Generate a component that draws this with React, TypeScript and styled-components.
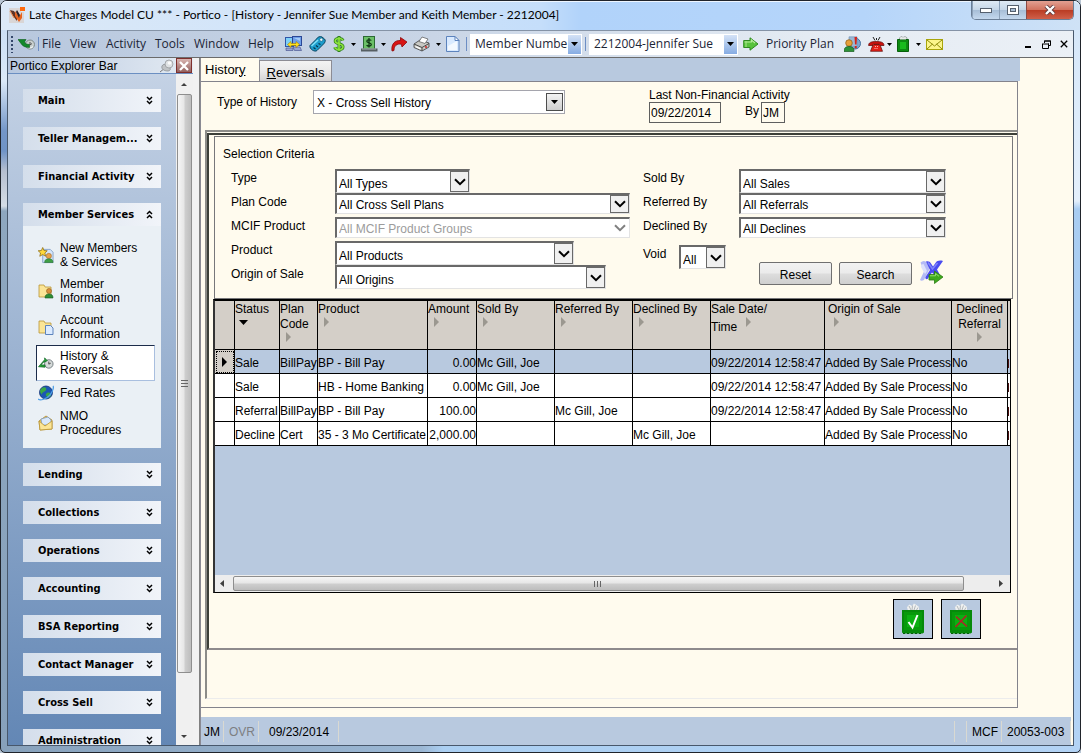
import React from "react";
import styled, { createGlobalStyle, css } from "styled-components";

const ui = `"Liberation Sans", Arial, sans-serif`;
const chrome = `"Open Sans", "Noto Sans", sans-serif`;
const cream = "#fffbee";
const steel = "#b8c9df";

const GlobalStyle = createGlobalStyle`
  * { box-sizing: border-box; }
  body { margin: 0; background: #b9c6d4; font: 12px/14px ${ui}; color: #000; }
  button, input, select { font: inherit; color: inherit; margin: 0; }
  svg { display: block; flex: none; }
`;

const Window = styled.div`
  height: 100vh;
  min-height: 600px;
  display: flex;
  flex-direction: column;
  padding: 0 6px 6px;
  border: 1px solid #20242b;
  border-radius: 7px 7px 5px 5px;
  background:
    linear-gradient(180deg, #c4daf3 0, #dbe9f8 80px, #7396c8 130px, #6f93c6 150px, #b5bfd0 170px, #d5dde6 205px, #8ea7bf 210px, #87a1bb 100%) left / 7px 100% no-repeat,
    linear-gradient(180deg, #9cc4ee 0, #d6e7f9 20px, #e4effb 200px, #a9cdf2 208px, #b3d3f5 100%) right / 7px 100% no-repeat,
    linear-gradient(90deg, #87a1bb 0, #9bb7d4 39%, #abcff2 41%, #b3d3f5 100%);
`;

const TitleBar = styled.header`
  height: 29px;
  flex: none;
  display: flex;
  align-items: flex-start;
  margin: 0 -6px;
  padding: 0 6px 0 8px;
  border-radius: 6px 6px 0 0;
  background: linear-gradient(90deg, #dce9f7 0, #d3e5f9 240px, #c5defa 540px, #b1d3fa 580px, #b5d5fa 80%, #cfe2f6 100%);
  box-shadow: inset 0 1px 0 #eef6ff;
`;

const Title = styled.h1`
  flex: 1;
  margin: 6px 0 0 4px;
  font: 12px/16px Lato, ${chrome};
  white-space: nowrap;
`;

const AppIcon = styled.span`
  margin-top: 6px;
`;

const CaptionButtons = styled.div`
  display: flex;
  height: 19px;
  border: 1px solid #6a7e96;
  border-top: 0;
  border-radius: 0 0 5px 5px;
  overflow: hidden;
`;

const CaptionButton = styled.button<{ $close?: boolean }>`
  width: ${(p) => (p.$close ? 47 : 27)}px;
  display: grid;
  place-items: center;
  padding: 0;
  border: 0;
  border-left: ${(p) => (p.$close ? "1px solid #8b4a44" : "1px solid #8ba0b8")};
  background: ${(p) =>
    p.$close
      ? "linear-gradient(#e2a092 0, #d2735f 48%, #b93b22 50%, #d0604a 100%)"
      : "linear-gradient(#dfeaf5 0, #c5d6e8 48%, #a6bdd6 50%, #c4d8ee 100%)"};
`;

const Client = styled.div`
  flex: 1;
  min-height: 0;
  display: flex;
  flex-direction: column;
  border: 1px solid #48586c;
  border-top-color: #8593a6;
  background: ${cream};
`;

const Toolbar = styled.nav`
  height: 27px;
  flex: none;
  display: flex;
  align-items: center;
  padding: 0 0 0 3px;
  font: 12px/16px ${chrome};
  color: #1c2536;
  background: linear-gradient(90deg, #b8c8de 0, #c9d5e6 40%, #e4ebf3 75%, #ebf0f6 100%);
  border-bottom: 1px solid #6b6b6b;
`;

const Grip = styled.span`
  width: 2px;
  height: 17px;
  margin-right: 5px;
  background: repeating-linear-gradient(180deg, #34476b 0 2px, transparent 2px 4px);
`;

const ToolDivider = styled.span`
  width: 1px;
  height: 14px;
  margin: 0 3px;
  background: #6d8ec4;
`;

const MenuItem = styled.button<{ $w: number }>`
  width: ${(p) => p.$w}px;
  padding: 0;
  border: 0;
  background: none;
  text-align: left;
  white-space: nowrap;
`;

const ToolButton = styled.button<{ $w?: number }>`
  width: ${(p) => p.$w ?? 24}px;
  height: 22px;
  flex: none;
  display: flex;
  align-items: center;
  justify-content: space-between;
  padding: 0 5px 0 0;
  border: 0;
  background: none;
`;

const Spacer = styled.span`
  flex: 1;
`;

const ToolCombo = styled.span<{ $w: number; $after?: number }>`
  display: grid;
  grid-template-columns: minmax(0, 1fr) 14px;
  width: ${(p) => p.$w}px;
  height: 21px;
  margin-right: ${(p) => p.$after ?? 0}px;
  background: #fff;
  & > select {
    grid-area: 1 / 1 / 2 / 3;
    width: 100%;
    appearance: none;
    border: 0;
    padding: 0 14px 0 5px;
    background: transparent;
    text-overflow: clip;
  }
  & > i {
    grid-area: 1 / 2;
    display: grid;
    place-items: center;
    margin: 1px 1px 1px 0;
    pointer-events: none;
    background: linear-gradient(#d4e2f6, #86ace3);
  }
`;

const MdiButton = styled.button`
  width: 18px;
  height: 18px;
  padding: 0;
  border: 0;
  display: grid;
  place-items: center;
  background: none;
`;

const Body = styled.div`
  flex: 1;
  min-height: 0;
  display: flex;
`;

const Sidebar = styled.aside`
  width: 185px;
  flex: none;
  display: flex;
  flex-direction: column;
`;

const SidebarTitle = styled.div`
  height: 16px;
  flex: none;
  display: flex;
  align-items: center;
  gap: 1px;
  padding: 0 1px 0 2px;
  background: linear-gradient(90deg, #b6c7df, #e4ebf3);
  border-bottom: 1px solid #6b8fc2;
  & > h2 {
    flex: 1;
    margin: 0;
    font: 12px/14px ${ui};
  }
`;

const PlainIcon = styled.button<{ $close?: boolean }>`
  width: 16px;
  height: 15px;
  display: grid;
  place-items: center;
  padding: 0;
  border: ${(p) => (p.$close ? "1px solid #7e2f2c" : "0")};
  background: ${(p) => (p.$close ? "linear-gradient(#d9b5b1, #93605e)" : "none")};
`;

const SidebarBody = styled.div`
  flex: 1;
  min-height: 0;
  display: flex;
`;

const Groups = styled.div`
  flex: 1;
  min-width: 0;
  overflow: hidden;
  padding: 15px 15px 0;
  background: linear-gradient(#c4d2e5, #6387b5);
`;

const Group = styled.section`
  margin-bottom: 15px;
`;

const GroupHeader = styled.button`
  width: 100%;
  height: 23px;
  display: flex;
  align-items: center;
  justify-content: space-between;
  padding: 0 8px 0 15px;
  border: 0;
  background: linear-gradient(90deg, #d4deeb, #f1f4f9);
  font: bold 11px/16px "DejaVu Sans Condensed", "DejaVu Sans", sans-serif;
  white-space: nowrap;
`;

const GroupItems = styled.ul`
  margin: 0;
  padding: 11px 6px 7px 13px;
  list-style: none;
  background: #eaf0f5;
`;

const GroupLink = styled.a<{ $active?: boolean }>`
  display: flex;
  align-items: center;
  gap: 6px;
  padding: 3px 1px;
  border: 1px solid transparent;
  color: #000;
  text-decoration: none;
  white-space: pre-line;
  ${(p) =>
    p.$active &&
    css`
      background: #fff;
      border-color: #1c2c4a #a9bfdf #a9bfdf #1c2c4a;
    `}
  & > svg {
    width: 16px;
  }
`;

const VScroll = styled.div`
  width: 17px;
  flex: none;
  display: flex;
  flex-direction: column;
  align-items: center;
  justify-content: space-between;
  padding: 7px 0 5px;
  background: #f0f0f0;
`;

const VThumb = styled.div`
  flex: 1;
  width: 15px;
  margin: 6px 0 60px;
  display: grid;
  place-items: center;
  border: 1px solid #8e8e8e;
  border-radius: 2px;
  background: linear-gradient(90deg, #f5f5f5, #e6e6e6 48%, #cfcfcf 52%, #bdbdbd);
`;

const Splitter = styled.div`
  width: 7px;
  flex: none;
  background: #f1f1f1;
  border-right: 1px solid #808080;
`;

const Main = styled.main`
  flex: 1;
  min-width: 0;
  display: flex;
  flex-direction: column;
  border-left: 1px solid #8a8a93;
`;

const Workspace = styled.div`
  flex: 1;
  min-height: 0;
  display: flex;
  flex-direction: column;
  margin: 0 55px 9px 0;
`;

const Tabs = styled.div`
  height: 23px;
  flex: none;
  display: flex;
  align-items: flex-end;
  background: ${steel};
  margin-right: -2px;
`;

const Tab = styled.button<{ $active?: boolean }>`
  height: ${(p) => (p.$active ? 23 : 21)}px;
  width: ${(p) => (p.$active ? 58 : 73)}px;
  padding: ${(p) => (p.$active ? "0 4px" : "3px 4px 0")};
  text-align: ${(p) => (p.$active ? "left" : "center")};
  border: 1px solid ${(p) => (p.$active ? cream : "#8c8c94")};
  border-width: ${(p) => (p.$active ? "0" : "1px 1px 0")};
  background: ${(p) => (p.$active ? cream : "linear-gradient(#f3f3f3, #e9e9e9 50%, #d3d3d3)")};
  font-size: 13px;
  line-height: 16px;
`;

const TabPanel = styled.section`
  flex: 1;
  min-height: 0;
  display: flex;
  flex-direction: column;
  border: 1px solid #83838c;
  border-left: 0;
  padding: 0 0 8px 4px;
`;

const HistoryHeader = styled.div`
  height: 48px;
  flex: none;
  display: grid;
  grid-template-columns: 96px 252px 84px auto;
  align-items: start;
  padding: 8px 0 0 12px;
`;

const HeaderLabel = styled.label`
  line-height: 24px;
`;

const TypeCombo = styled.span`
  display: grid;
  grid-template-columns: minmax(0, 1fr) 18px;
  height: 24px;
  border: 1px solid #a5a5ad;
  background: #fff;
  & > select {
    grid-area: 1 / 1 / 2 / 3;
    appearance: none;
    border: 0;
    padding: 2px 20px 0 3px;
    background: transparent;
  }
  & > i {
    grid-area: 1 / 2;
    display: grid;
    place-items: center;
    margin: 2px 1px 2px 0;
    pointer-events: none;
    border: 1px solid #4d4d4d;
    background: linear-gradient(#f2f2f2, #cfcfcf);
  }
`;

const LastActivity = styled.div`
  display: grid;
  grid-template-columns: 72px 40px 24px;
  margin-top: -1px;
  & > span {
    grid-column: 1 / 4;
    line-height: 13px;
    white-space: nowrap;
  }
  & > label {
    padding: 2px 2px 0 0;
    text-align: right;
  }
`;

const ReadBox = styled.input`
  width: 100%;
  height: 21px;
  padding: 0 1px;
  border: 1px solid #5f5f5f;
  background: ${cream};
`;

const OuterFrame = styled.div`
  flex: 1;
  min-height: 0;
  display: flex;
  flex-direction: column;
  border: 2px solid #8c8c88;
  border-right: 0;
  border-bottom: 1px solid #ececec;
  padding: 1px 0 48px;
`;

const InnerFrame = styled.div`
  flex: 1;
  min-height: 0;
  display: flex;
  flex-direction: column;
  border: 2px solid #3c3f38;
  border-right: 0;
  border-bottom-color: #8e8a8c;
  padding: 1px 4px 9px;
`;

const Criteria = styled.form`
  height: 163px;
  flex: none;
  display: grid;
  grid-template-columns: 412px minmax(0, 1fr);
  grid-template-rows: 32px 1fr;
  margin-left: 1px;
  padding: 0 0 0 8px;
  border: 1px solid #77777a;
  & > h3 {
    grid-column: 1 / 3;
    margin: 0;
    padding-top: 10px;
    font: 12px/14px ${ui};
  }
`;

const Fields = styled.div`
  padding-left: 8px;
`;

const Field = styled.div<{ $label: number }>`
  height: 24px;
  display: grid;
  grid-template-columns: ${(p) => p.$label}px max-content;
  align-items: start;
  & > label {
    line-height: 18px;
  }
`;

const FieldCombo = styled.span<{ $w: number; $tall?: boolean; $off?: boolean }>`
  display: grid;
  grid-template-columns: minmax(0, 1fr) 19px;
  width: ${(p) => p.$w}px;
  height: ${(p) => (p.$tall ? 24 : 21)}px;
  border: 1px solid #e3e3e3;
  border-width: 2px 1px 1px 2px;
  border-top-color: #696969;
  border-left-color: #696969;
  background: #fff;
  & > select {
    grid-area: 1 / 1 / 2 / 3;
    appearance: none;
    border: 0;
    padding: ${(p) => (p.$tall ? 4 : 1)}px 20px 0 2px;
    background: transparent;
    opacity: 1;
    line-height: 14px;
    color: ${(p) => (p.$off ? "#9c9c9c" : "#000")};
  }
  & > i {
    grid-area: 1 / 2;
    display: grid;
    place-items: center;
    pointer-events: none;
    border: ${(p) => (p.$off ? "0" : "1px solid #696969")};
    background: ${(p) => (p.$off ? "#fff" : "#f0f0f0")};
  }
`;

const Actions = styled.div`
  height: 40px;
  display: flex;
  align-items: flex-end;
  margin-top: 4px;
`;

const VoidField = styled.div`
  flex: none;
  width: 116px;
  align-self: flex-start;
  display: grid;
  grid-template-columns: 36px 47px;
  & > label {
    line-height: 18px;
  }
`;

const PushButton = styled.button`
  width: 73px;
  height: 23px;
  flex: none;
  margin-right: 7px;
  padding: 2px 0 0;
  border: 1px solid #707070;
  border-radius: 2px;
  background: linear-gradient(#f2f2f2, #ebebeb 48%, #dddddd 52%, #cfcfcf);
`;

const IconButton = styled.button`
  width: 26px;
  height: 26px;
  padding: 0;
  border: 0;
  background: none;
`;

const GridFrame = styled.div`
  flex: 1;
  min-height: 150px;
  display: flex;
  flex-direction: column;
  margin-right: 2px;
  border: 1px solid #000;
  border-width: 2px 1px 1px 2px;
  border-left-color: #333;
  background: ${steel};
`;

const GridScroll = styled.div`
  flex: 1;
  min-height: 0;
  overflow: hidden;
`;

const Table = styled.table`
  width: 100%;
  table-layout: fixed;
  border-collapse: separate;
  border-spacing: 0;
`;

const Th = styled.th<{ $align?: "center"; $indent?: number }>`
  height: 49px;
  padding: 1px 0 0 ${(p) => p.$indent ?? 0}px;
  border-right: 1px solid #000;
  border-bottom: 1px solid #000;
  background: #d4cfc8;
  font-weight: normal;
  line-height: 15px;
  text-align: ${(p) => p.$align ?? "left"};
  vertical-align: top;
  white-space: pre-line;
  overflow: hidden;
  &:last-child {
    border-right: 0;
  }
`;

const SortMark = styled.span<{ $inline?: boolean; $center?: boolean }>`
  display: ${(p) => (p.$inline ? "inline-block" : "block")};
  vertical-align: 4px;
  width: 10px;
  height: 10px;
  margin: ${(p) => (p.$inline ? "0 0 0 7px" : p.$center ? "0 auto" : "0 0 0 4px")};
`;

const Tr = styled.tr<{ $selected?: boolean }>`
  background: ${(p) => (p.$selected ? steel : "#fff")};
`;

const Td = styled.td<{ $right?: boolean }>`
  height: 24px;
  padding: 3px 0 0;
  border-right: 1px solid #000;
  border-bottom: 1px solid #000;
  text-align: ${(p) => (p.$right ? "right" : "left")};
  white-space: nowrap;
  &:last-child {
    border-right: 0;
  }
`;

const HiddenColumnEdge = styled.span`
  display: block;
  width: 1px;
  height: 9px;
  background: #4a1010;
`;

const RowHead = styled.td<{ $current?: boolean }>`
  padding: 0;
  border-right: 1px solid #000;
  border-bottom: 1px solid #000;
  & > svg {
    margin: 0 auto;
  }
  ${(p) =>
    p.$current &&
    css`
      background: #d4cfc8;
      outline: 1px dotted #000;
      outline-offset: -2px;
    `}
`;

const HScroll = styled.div`
  height: 17px;
  flex: none;
  display: flex;
  align-items: center;
  justify-content: space-between;
  padding: 0 6px 0 4px;
  background: #ededed;
`;

const HThumb = styled.div`
  flex: 1;
  height: 15px;
  margin: 0 33px 0 7px;
  display: grid;
  place-items: center;
  border: 1px solid #8e8e8e;
  border-radius: 2px;
  background: linear-gradient(#f5f5f5, #e6e6e6 48%, #cfcfcf 52%, #bdbdbd);
`;

const BagRow = styled.div`
  display: flex;
  justify-content: flex-end;
  gap: 8px;
  padding: 6px 32px 0 0;
`;

const BagButton = styled.button`
  width: 40px;
  height: 40px;
  display: grid;
  place-items: center;
  padding: 0;
  border: 1px solid #000;
  background: ${steel};
`;

const StatusBar = styled.footer`
  height: 28px;
  flex: none;
  display: flex;
  align-items: center;
  margin-right: 2px;
  background: ${steel};
`;

const StatusCell = styled.span<{ $w: number; $muted?: boolean; $pad?: number }>`
  width: ${(p) => p.$w}px;
  height: 21px;
  padding: 4px 0 0 ${(p) => p.$pad ?? 5}px;
  border-right: 1px solid #d9d9d2;
  color: ${(p) => (p.$muted ? "#7d7f82" : "#000")};
  white-space: nowrap;
`;

/* ---- small glyphs ---- */

const Caret = () => (
  <svg width="7" height="4" viewBox="0 0 7 4" aria-hidden="true">
    <path d="M0 0h7L3.500 4z" fill="#000" />
  </svg>
);

const SmallCaret = () => (
  <svg width="5" height="3" viewBox="0 0 5 3" aria-hidden="true">
    <path d="M0 0h5L2.500 3z" fill="#000" />
  </svg>
);

const Chevron = ({ off }: { off?: boolean }) => (
  <svg width="12" height="8" viewBox="0 0 12 8" aria-hidden="true">
    <path d="M1 1.200L6 6.200L11 1.200" fill="none" stroke={off ? "#808080" : "#000"} strokeWidth="2" />
  </svg>
);

const DoubleChevron = ({ up }: { up?: boolean }) => (
  <svg width="7" height="9" viewBox="0 0 7 9" aria-hidden="true">
    <path
      d={up ? "M1 4L3.500 1.500L6 4M1 8L3.500 5.500L6 8" : "M1 1L3.500 3.500L6 1M1 5L3.500 7.500L6 5"}
      fill="none"
      stroke="#000"
      strokeWidth="1.500"
    />
  </svg>
);

const Triangle = ({ dir, fill }: { dir: "down" | "right"; fill: string }) => (
  <svg width="10" height="10" viewBox="0 0 10 10" aria-hidden="true">
    <path d={dir === "down" ? "M0 3H9L4.500 8z" : "M2 0L7 5L2 10z"} fill={fill} />
  </svg>
);

const ScrollArrow = ({ dir }: { dir: "up" | "down" | "left" | "right" }) => {
  const d = { up: "M0 5L3 2L6 5z", down: "M0 2H6L3 5z", left: "M5 0L1 3.500L5 7z", right: "M2 0L6 3.500L2 7z" }[dir];
  return (
    <svg width="7" height="7" viewBox="0 0 7 7" aria-hidden="true">
      <path d={d} fill="#404040" />
    </svg>
  );
};

/* ---- toolbar and application icons ---- */

const LogoIcon = () => (
  <svg width="16" height="16" viewBox="0 0 16 16" aria-hidden="true">
    <path d="M0 1h12v4h3v11H0z" fill="#d9d6d6" />
    <path d="M1 3l4 1 3 5v5L4 9z" fill="#5d3328" />
    <path d="M6 4l4 6 3-5v6l-3 4-4-6z" fill="#e8641e" />
    <path d="M8 3l3 5-1 3-3-6z" fill="#2b1d22" />
    <path d="M11 0h5v4h-5z" fill="#ff6a0d" />
    <path d="M1 4l4 7" stroke="#f08a4a" />
  </svg>
);

const ReturnIcon = () => (
  <svg width="17" height="14" viewBox="0 0 17 14" aria-hidden="true">
    <circle cx="12" cy="7.500" r="4.500" fill="#c9cfce" stroke="#7f8a8a" />
    <path d="M9 9.500c1.500 2 4 2 6 0" stroke="#eef2f2" strokeWidth="1.200" fill="none" />
    <path d="M12 5v3l2-1.500" stroke="#555" fill="none" />
    <path d="M0 2.500h8L6.500 5c1 1.700 2.500 2.500 5 2.500V10.500C7 10.500 4.500 9 3 6.500z" fill="#12892a" stroke="#0a5d1a" strokeWidth=".6" />
  </svg>
);

const NetworkIcon = () => (
  <svg width="17" height="16" viewBox="0 0 17 16" aria-hidden="true">
    <rect x=".5" y="1.500" width="8" height="9" fill="#7fd0f7" stroke="#2f56a8" />
    <rect x="7.500" y=".5" width="9" height="9" fill="#6f9fe8" stroke="#2b4796" />
    <path d="M9 2h6v3z" fill="#a6cbf7" />
    <path d="M1 12h7v2.500H1zM8 11h7l1.500 3.500H9.500z" fill="#9aa5d0" stroke="#3d4a8a" strokeWidth=".6" />
    <path d="M2.500 8.500l3.500-3v2h5v-2l3.500 3-3.500 3v-2H6v2z" fill="#ffe21c" stroke="#a17a00" strokeWidth=".6" />
  </svg>
);

const KeyIcon = () => (
  <svg width="17" height="16" viewBox="0 0 17 16" aria-hidden="true">
    <path d="M1 9.500L7.500 3C8.500 1 11 0 13 1l2.500 2c1.500 1 .5 4-1 5L8 14.500c-2 2-8-1.500-7-5z" fill="#1c9ccc" stroke="#0b4560" />
    <path d="M2.500 10L9 4" stroke="#7fe0f7" strokeWidth="1.600" />
    <circle cx="12.300" cy="3.700" r="1.600" fill="#eafcff" stroke="#0b5576" strokeWidth=".6" />
    <path d="M4.500 11.500l2 1.500M7 9.500l2 1.500M9.500 7.500l2 1" stroke="#06344a" strokeWidth="1.200" />
  </svg>
);

const DollarIcon = () => (
  <svg width="12" height="16" viewBox="0 0 12 16" aria-hidden="true">
    <path d="M6 0v16M10 4.500C9.500 3 8 2.500 6 2.500S2.200 3.200 2.200 5 4 7.300 6 7.800s4 1 4 3-2 2.800-4 2.800-3.700-.7-4.300-2.300" fill="none" stroke="#2c7d1a" strokeWidth="3" />
    <path d="M6 1v14M10 4.500C9.500 3 8 2.500 6 2.500S2.200 3.200 2.200 5 4 7.300 6 7.800s4 1 4 3-2 2.800-4 2.800-3.700-.7-4.300-2.300" fill="none" stroke="#8be33c" strokeWidth="1.600" />
  </svg>
);

const CashIcon = () => (
  <svg width="17" height="16" viewBox="0 0 17 16" aria-hidden="true">
    <rect x="2.500" y=".5" width="11" height="13" fill="#6cc068" stroke="#2c6a34" />
    <path d="M0 12.500h16.500v3H0z" fill="#565e62" />
    <path d="M1 13h14" stroke="#a6b0b4" />
    <path d="M8 2v9.500M10.300 4.500C9.500 3.500 5.800 3.300 5.800 5.200S10.300 6.500 10.300 8.600 6.500 10.500 5.600 9.200" fill="none" stroke="#0b2f10" strokeWidth="1.200" />
  </svg>
);

const RedArrowIcon = () => (
  <svg width="17" height="16" viewBox="0 0 17 16" aria-hidden="true">
    <path d="M1 15C0 8 4 4 9.500 4.500V1.500L16 6l-5 5-.7-2.800C6 7.500 3 9.500 3 14.500z" fill="#d81414" stroke="#8d0808" strokeWidth=".8" />
  </svg>
);

const PrinterIcon = () => (
  <svg width="17" height="16" viewBox="0 0 17 16" aria-hidden="true">
    <path d="M1 8l6-4 9 3v4l-7 4-8-3.500z" fill="#c9c9c4" stroke="#3d3d3d" strokeWidth=".8" />
    <path d="M1 8l8 3.500L16 7.500M9 11.500V15" fill="none" stroke="#4a4a4a" />
    <path d="M6 5.500l3-4.500 6 2-3 4.500z" fill="#fff" stroke="#555" strokeWidth=".7" />
    <path d="M2.500 10.500l5 2.300" stroke="#fff" strokeWidth="1.300" />
    <circle cx="13" cy="11" r="1" fill="#d12626" />
  </svg>
);

const PageIcon = () => (
  <svg width="14" height="16" viewBox="0 0 14 16" aria-hidden="true">
    <path d="M.5.5H9L13 4.500V15.500H.5z" fill="#d9eaff" stroke="#5c83bd" />
    <path d="M9 .5V4.500h4z" fill="#fff" stroke="#5c83bd" />
    <path d="M2 10l9-5v9H2z" fill="#f4f9ff" />
  </svg>
);

const GoIcon = () => (
  <svg width="16" height="14" viewBox="0 0 16 14" aria-hidden="true">
    <path d="M.7 3.500H7V.8L15 7 7 13.200V10.500H.7z" fill="#57c23c" stroke="#2f8a22" />
    <path d="M1.500 5h7V3L12 6" fill="none" stroke="#b5eb9a" strokeWidth="1.200" />
    <path d="M3 4v6" stroke="#a7e58c" />
  </svg>
);

const PersonAlertIcon = () => (
  <svg width="17" height="16" viewBox="0 0 17 16" aria-hidden="true">
    <circle cx="11" cy="7.500" r="5.500" fill="#7ba7d2" stroke="#47719e" />
    <path d="M5 .8h8v10H5z" fill="#9ab8d6" stroke="#6a8cb0" strokeWidth=".6" />
    <path d="M10.500 1h2.500l-.5 7.500h-1.500zM10.800 10h1.900v2.200h-1.900z" fill="#d4241c" />
    <circle cx="5" cy="7" r="3.300" fill="#e8a03a" stroke="#8b5a13" strokeWidth=".7" />
    <path d="M0 15.500c0-4 2-5 5-5s5 1 5 5z" fill="#2e9238" stroke="#185c20" strokeWidth=".7" />
  </svg>
);

const PhoneIcon = () => (
  <svg width="17" height="15" viewBox="0 0 17 15" aria-hidden="true">
    <path d="M5 0l2 3.500M8.500 1v2M12 0l-2 3.500" stroke="#222" />
    <path d="M.6 8.500C.6 5.500 3 4.500 8.200 4.500S16 5.500 16 8.500h-4.500V7.300h-6.500v1.200z" fill="#c9130f" stroke="#5a0706" strokeWidth=".7" />
    <path d="M2.500 14.300L4.500 9l1.500-1.500h5L12.500 9l2 5.300z" fill="#e32018" stroke="#5a0706" strokeWidth=".7" />
    <path d="M7 9.500h3M6.500 11.500h4" stroke="#ffb3ae" strokeDasharray="1 1" />
  </svg>
);

const SmallBagIcon = () => (
  <svg width="13" height="16" viewBox="0 0 13 16" aria-hidden="true">
    <path d="M2.500 5V1.800L4.500.5l1.500 1 2-1 2 1.300V5z" fill="#dfe3e2" stroke="#8a9090" strokeWidth=".7" />
    <path d="M.5 3.500h11v12H.5z" fill="#0d8a12" stroke="#05600a" />
    <rect x="3" y="6" width="6" height="7" fill="#18bb1e" />
    <path d="M3 3.500h6V1.500H3z" fill="#e8ebeb" />
  </svg>
);

const MailIcon = () => (
  <svg width="17" height="11" viewBox="0 0 17 11" aria-hidden="true">
    <rect x=".5" y=".5" width="16" height="10" fill="#fbf58c" stroke="#a8a50c" />
    <path d="M1 1l7.500 6L16 1M1 10l5.500-5M16 10l-5.500-5" fill="none" stroke="#8d8a0a" />
  </svg>
);

const PinIcon = () => (
  <svg width="16" height="14" viewBox="0 0 16 14" aria-hidden="true">
    <path d="M1 13L6 9" stroke="#777" />
    <path d="M3 7c1-2 3-2 4-1l4 3c1 1 0 3-2 3-4 0-7-2-6-5z" fill="#c0c3c6" stroke="#8e9296" strokeWidth=".8" />
    <circle cx="10" cy="5" r="4" fill="#dfe2e4" stroke="#95999d" strokeWidth=".8" />
    <circle cx="10.500" cy="4" r="1.800" fill="#fafafa" />
  </svg>
);

const CloseGlyph = ({ color = "#fff", size = 8 }: { color?: string; size?: number }) => (
  <svg width={size} height={size} viewBox="0 0 8 8" aria-hidden="true">
    <path d="M.8.8L7.200 7.200M7.200.8L.8 7.200" stroke={color} strokeWidth={color === "#fff" ? 1.800 : 1.300} />
  </svg>
);

const ExportIcon = () => (
  <svg width="26" height="26" viewBox="0 0 26 26" aria-hidden="true">
    <path d="M1.500 3.500C4 1 7 1.500 9 5l2 4-2 4-4 8c-2 1-3 1-4 0l4-8.500z" fill="#b4baf6" />
    <path d="M2 8c0-2 1-3 2.500-3L8 12l-2 3z" fill="#dde1fd" />
    <path d="M7 2.500c2-.8 4 0 5 2l2 3 2.500-3.500C18 1.500 21 1 24 2l-6 8.500 2.500 4.500-5 1-2.500-2.500L8.500 20c-1.500.5-2.500-.5-2-2l4.500-7z" fill="#4a4cf0" />
    <path d="M9 3.500L13.500 10 18.500 4" fill="none" stroke="#7f84fa" strokeWidth="1.500" />
    <path d="M10 15.500h5.500V12l8.500 6-8.500 6.500V21H10z" fill="#3ea91c" stroke="#2a7c12" strokeWidth=".8" />
    <path d="M11 16.800h5.500v-2.300l3.500 2.800" fill="none" stroke="#93e06a" />
  </svg>
);

const BagIcon = ({ ok }: { ok?: boolean }) => (
  <svg width="22" height="32" viewBox="0 0 22 32" aria-hidden="true">
    <path d="M6 8L5 4l2.500-2.500L10 3l2-2.500L14.500 2 17 4v4z" fill="#eef0f0" />
    <path d="M7 3l2 4M10.500 2.500L10 7M13.500 2.500L12 7M16 4.500L14.500 7" stroke="#b3b8bb" />
    <path d="M0 7h22v22.500l-1.500 1H1.500L0 29.500z" fill="#068a0a" />
    <rect x="2" y="9" width="18" height="18" fill="#079a0b" />
    <rect x="5" y="12" width="12" height="12" fill="#0cb012" />
    <path d="M1 30.500h20" stroke="#045c07" strokeDasharray="2 2" />
    {ok ? (
      <path d="M6.500 19l4 5.500L15.500 12" fill="none" stroke="#fff" strokeWidth="2" />
    ) : (
      <path d="M6 13.500L17 23.500M16.500 12.500L5.500 24" fill="none" stroke="#b3202a" strokeWidth="1.600" />
    )}
  </svg>
);

/* ---- explorer bar icons ---- */

const NewMemberIcon = () => (
  <svg width="17" height="17" viewBox="0 0 17 17" aria-hidden="true">
    <path d="M5 2h8l3 3v11H5z" fill="#d4e5fa" stroke="#7393bf" strokeWidth=".8" />
    <path d="M5 0l1.400 3.200 3.400.3-2.500 2.300.8 3.500L5 7.500 1.900 9.300l.8-3.500L.2 3.500l3.400-.3z" fill="#ffd83b" stroke="#8c6a10" strokeWidth=".8" />
    <circle cx="11.500" cy="9" r="2.800" fill="#e9a24a" stroke="#a0682a" strokeWidth=".6" />
    <path d="M7 16c0-3 2-4 4.500-4s4.500 1 4.500 4z" fill="#3f9f45" stroke="#24702a" strokeWidth=".6" />
  </svg>
);

const Folder = () => <path d="M1 2h5l1 2h6v10H1z" fill="#fbe596" stroke="#b99535" strokeWidth=".8" />;

const MemberFolderIcon = () => (
  <svg width="16" height="16" viewBox="0 0 16 16" aria-hidden="true">
    <Folder />
    <circle cx="11" cy="8" r="2.500" fill="#d98f3c" stroke="#8d5a1d" strokeWidth=".6" />
    <path d="M7 15c0-3 1.500-4 4-4s4 1 4 4z" fill="#2e8d36" stroke="#185c20" strokeWidth=".6" />
  </svg>
);

const AccountFolderIcon = () => (
  <svg width="16" height="16" viewBox="0 0 16 16" aria-hidden="true">
    <Folder />
    <path d="M7.500 6.500h5l2.500 2.500v6.500H7.500z" fill="#dcebff" stroke="#5c83bd" />
  </svg>
);

const HistoryIcon = () => (
  <svg width="17" height="14" viewBox="0 0 17 14" aria-hidden="true">
    <circle cx="11.500" cy="8" r="4.500" fill="#d5dad9" stroke="#727c80" />
    <path d="M11.500 5.500v2.700l2-1" stroke="#444" fill="none" />
    <path d="M.5 11L7 3.500V1.500l3 3-4 2V5.500L3.500 9h4v2.500z" fill="#27a034" stroke="#12662a" strokeWidth=".7" />
  </svg>
);

const GlobeIcon = () => (
  <svg width="16" height="16" viewBox="0 0 16 16" aria-hidden="true">
    <circle cx="8" cy="7.500" r="6.500" fill="#1c57b4" stroke="#0c2d6e" strokeWidth=".8" />
    <path d="M4 3c3-2 5 0 4 2S4 7 4 9 2 7 2 6s1-2 2-3zM9 8c2-1 4 0 4 2s-3 3-4 2-2-3 0-4z" fill="#39a845" />
    <path d="M0 14c2 2 9 0 12-4s4-8 3-9" fill="none" stroke="#4f9fe6" strokeWidth="1.300" />
  </svg>
);

const EnvelopeIcon = () => (
  <svg width="16" height="16" viewBox="0 0 16 16" aria-hidden="true">
    <path d="M1 6l7-5 6 4v9l-12 1z" fill="#f3cc5c" stroke="#b48a2a" strokeWidth=".8" />
    <path d="M3 4l7-2 3 3v5H4z" fill="#d8e8fb" stroke="#7393bf" strokeWidth=".7" />
    <path d="M1 6l6 5 7-5v8L2 15z" fill="#fbe596" stroke="#b99535" strokeWidth=".8" />
  </svg>
);

const ThumbGrip = ({ vertical }: { vertical?: boolean }) =>
  vertical ? (
    <svg width="7" height="8" viewBox="0 0 7 8" aria-hidden="true">
      <path d="M0 .5h7M0 3.500h7M0 6.500h7" stroke="#666" />
    </svg>
  ) : (
    <svg width="9" height="6" viewBox="0 0 9 6" aria-hidden="true">
      <path d="M.5 0v6M3.500 0v6M6.500 0v6" stroke="#666" />
    </svg>
  );

/* ---- data ---- */

const services = [
  { text: "New Members\n& Services", icon: <NewMemberIcon /> },
  { text: "Member\nInformation", icon: <MemberFolderIcon /> },
  { text: "Account\nInformation", icon: <AccountFolderIcon /> },
  { text: "History &\nReversals", icon: <HistoryIcon />, active: true },
  { text: "Fed Rates", icon: <GlobeIcon /> },
  { text: "NMO\nProcedures", icon: <EnvelopeIcon /> },
];

const groupNames = [
  "Main",
  "Teller Managem...",
  "Financial Activity",
  "Member Services",
  "Lending",
  "Collections",
  "Operations",
  "Accounting",
  "BSA Reporting",
  "Contact Manager",
  "Cross Sell",
  "Administration",
];

const menus: [string, number][] = [
  ["File", 28],
  ["View", 36],
  ["Activity", 49],
  ["Tools", 39],
  ["Window", 54],
  ["Help", 37],
];

const columnWidths = [20, 45, 38, 110, 49, 78, 78, 78, 114, 127, 56];

const rows = [
  ["Sale", "BillPay", "BP - Bill Pay", "0.00", "Mc Gill, Joe", "", "", "09/22/2014 12:58:47", "Added By Sale Process", "No"],
  ["Sale", "", "HB - Home Banking", "0.00", "Mc Gill, Joe", "", "", "09/22/2014 12:58:47", "Added By Sale Process", "No"],
  ["Referral", "BillPay", "BP - Bill Pay", "100.00", "", "Mc Gill, Joe", "", "09/22/2014 12:58:47", "Added By Sale Process", "No"],
  ["Decline", "Cert", "35 - 3 Mo Certificate", "2,000.00", "", "", "Mc Gill, Joe", "", "Added By Sale Process", "No"],
];

interface ComboProps {
  id: string;
  label: string;
  value: string;
  width: number;
  labelWidth: number;
  tall?: boolean;
  off?: boolean;
}

const ComboField = ({ id, label, value, width, labelWidth, tall, off }: ComboProps) => (
  <Field $label={labelWidth}>
    <label htmlFor={id}>{label}</label>
    <FieldCombo $w={width} $tall={tall} $off={off}>
      <select id={id} disabled={off}>
        <option>{value}</option>
      </select>
      <i>
        <Chevron off={off} />
      </i>
    </FieldCombo>
  </Field>
);

const grey = "#9b9890";

export default function App() {
  return (
    <>
      <GlobalStyle />
      <Window>
        <TitleBar>
          <AppIcon>
            <LogoIcon />
          </AppIcon>
          <Title>Late Charges Model CU *** - Portico - [History - Jennifer Sue Member and Keith Member - 2212004]</Title>
          <CaptionButtons>
            <CaptionButton aria-label="Minimize">
              <svg width="12" height="5" viewBox="0 0 12 5">
                <rect x=".5" y=".5" width="11" height="4" fill="#fff" stroke="#55606e" />
              </svg>
            </CaptionButton>
            <CaptionButton aria-label="Restore">
              <svg width="12" height="10" viewBox="0 0 12 10">
                <rect x=".5" y=".5" width="11" height="9" fill="#fff" stroke="#55606e" />
                <rect x="3.500" y="3.500" width="5" height="3" fill="#a9bdd4" stroke="#55606e" />
              </svg>
            </CaptionButton>
            <CaptionButton $close aria-label="Close">
              <svg width="12" height="10" viewBox="0 0 12 10">
                <path d="M2 1L10 9M10 1L2 9" stroke="#5d3a3d" strokeWidth="4" />
                <path d="M2 1L10 9M10 1L2 9" stroke="#fff" strokeWidth="2.400" />
              </svg>
            </CaptionButton>
          </CaptionButtons>
        </TitleBar>

        <Client>
          <Toolbar>
            <Grip />
            <ReturnIcon />
            <ToolDivider />
            {menus.map(([name, w]) => (
              <MenuItem key={name} $w={w}>
                {name}
              </MenuItem>
            ))}
            <ToolButton aria-label="Network">
              <NetworkIcon />
            </ToolButton>
            <ToolButton aria-label="Keys">
              <KeyIcon />
            </ToolButton>
            <ToolButton $w={28} aria-label="Dollar">
              <DollarIcon />
              <SmallCaret />
            </ToolButton>
            <ToolButton $w={30} aria-label="Cash">
              <CashIcon />
              <SmallCaret />
            </ToolButton>
            <ToolButton $w={22} aria-label="Redo">
              <RedArrowIcon />
            </ToolButton>
            <ToolButton $w={33} aria-label="Print">
              <PrinterIcon />
              <SmallCaret />
            </ToolButton>
            <ToolButton $w={17} aria-label="New page">
              <PageIcon />
            </ToolButton>
            <ToolDivider />
            <ToolCombo $w={112}>
              <select aria-label="Search by">
                <option>Member Numbe</option>
              </select>
              <i>
                <Caret />
              </i>
            </ToolCombo>
            <ToolDivider />
            <ToolCombo $w={149} $after={5}>
              <select aria-label="Member">
                <option>2212004-Jennifer Sue</option>
              </select>
              <i>
                <Caret />
              </i>
            </ToolCombo>
            <ToolButton $w={23} aria-label="Go">
              <GoIcon />
            </ToolButton>
            <MenuItem $w={78}>Priority Plan</MenuItem>
            <ToolButton aria-label="Member alerts">
              <PersonAlertIcon />
            </ToolButton>
            <ToolButton $w={29} aria-label="Phone">
              <PhoneIcon />
              <SmallCaret />
            </ToolButton>
            <ToolButton $w={29} aria-label="Cross sell bag">
              <SmallBagIcon />
              <SmallCaret />
            </ToolButton>
            <ToolButton aria-label="Mail">
              <MailIcon />
            </ToolButton>
            <Spacer />
            <MdiButton aria-label="Minimize document">
              <svg width="6" height="8" viewBox="0 0 6 8">
                <path d="M0 7h6" stroke="#000" strokeWidth="2" />
              </svg>
            </MdiButton>
            <MdiButton aria-label="Restore document">
              <svg width="9" height="9" viewBox="0 0 9 9">
                <path d="M2.500 3V1H8.500V5.500H6.500M2 1H9M.5 4V8.500H6.500V3.500M0 4H7" fill="none" stroke="#000" />
              </svg>
            </MdiButton>
            <MdiButton aria-label="Close document">
              <CloseGlyph color="#000" />
            </MdiButton>
          </Toolbar>

          <Body>
            <Sidebar>
              <SidebarTitle>
                <h2>Portico Explorer Bar</h2>
                <PlainIcon aria-label="Pin">
                  <PinIcon />
                </PlainIcon>
                <PlainIcon $close aria-label="Close explorer bar">
                  <CloseGlyph size={10} />
                </PlainIcon>
              </SidebarTitle>
              <SidebarBody>
                <Groups>
                  {groupNames.map((name) => {
                    const open = name === "Member Services";
                    return (
                      <Group key={name}>
                        <GroupHeader aria-expanded={open}>
                          {name}
                          <DoubleChevron up={open} />
                        </GroupHeader>
                        {open && (
                          <GroupItems>
                            {services.map((s) => (
                              <li key={s.text}>
                                <GroupLink href="#" $active={s.active}>
                                  {s.icon}
                                  {s.text}
                                </GroupLink>
                              </li>
                            ))}
                          </GroupItems>
                        )}
                      </Group>
                    );
                  })}
                </Groups>
                <VScroll>
                  <ScrollArrow dir="up" />
                  <VThumb>
                    <ThumbGrip vertical />
                  </VThumb>
                  <ScrollArrow dir="down" />
                </VScroll>
              </SidebarBody>
            </Sidebar>
            <Splitter />

            <Main>
              <Workspace>
                <Tabs role="tablist">
                  <Tab $active role="tab" aria-selected="true">
                    Histor<u>y</u>
                  </Tab>
                  <Tab role="tab" aria-selected="false">
                    <u>R</u>eversals
                  </Tab>
                </Tabs>
                <TabPanel>
                  <HistoryHeader>
                    <HeaderLabel htmlFor="history-type">Type of History</HeaderLabel>
                    <TypeCombo>
                      <select id="history-type">
                        <option>X - Cross Sell History</option>
                      </select>
                      <i>
                        <Caret />
                      </i>
                    </TypeCombo>
                    <span />
                    <LastActivity>
                      <span id="last-activity">Last Non-Financial Activity</span>
                      <ReadBox readOnly aria-labelledby="last-activity" value="09/22/2014" />
                      <label htmlFor="last-by">By</label>
                      <ReadBox id="last-by" readOnly value="JM" />
                    </LastActivity>
                  </HistoryHeader>

                  <OuterFrame>
                    <InnerFrame>
                      <Criteria>
                        <h3>Selection Criteria</h3>
                        <Fields>
                          <ComboField id="type" label="Type" value="All Types" width={135} labelWidth={104} tall />
                          <ComboField id="plan" label="Plan Code" value="All Cross Sell Plans" width={295} labelWidth={104} />
                          <ComboField id="mcif" label="MCIF Product" value="All MCIF Product Groups" width={295} labelWidth={104} off />
                          <ComboField id="product" label="Product" value="All Products" width={239} labelWidth={104} tall />
                          <ComboField id="origin" label="Origin of Sale" value="All Origins" width={271} labelWidth={104} tall />
                        </Fields>
                        <Fields>
                          <ComboField id="sold" label="Sold By" value="All Sales" width={207} labelWidth={96} tall />
                          <ComboField id="referred" label="Referred By" value="All Referrals" width={207} labelWidth={96} />
                          <ComboField id="declined" label="Declined By" value="All Declines" width={207} labelWidth={96} />
                          <Actions>
                            <VoidField>
                              <label htmlFor="void">Void</label>
                              <FieldCombo $w={47} $tall>
                                <select id="void">
                                  <option>All</option>
                                </select>
                                <i>
                                  <Chevron />
                                </i>
                              </FieldCombo>
                            </VoidField>
                            <PushButton type="button">Reset</PushButton>
                            <PushButton type="button">Search</PushButton>
                            <IconButton type="button" aria-label="Export">
                              <ExportIcon />
                            </IconButton>
                          </Actions>
                        </Fields>
                      </Criteria>

                      <GridFrame>
                        <GridScroll>
                          <Table>
                            <colgroup>
                              {columnWidths.map((w, i) => (
                                <col key={i} width={w} />
                              ))}
                              <col />
                            </colgroup>
                            <thead>
                              <tr>
                                <Th />
                                <Th>
                                  Status
                                  <SortMark>
                                    <Triangle dir="down" fill="#000" />
                                  </SortMark>
                                </Th>
                                {["Plan Code", "Product", "Amount", "Sold By", "Referred By", "Declined By"].map((h) => (
                                  <Th key={h}>
                                    {h}
                                    <SortMark>
                                      <Triangle dir="right" fill={grey} />
                                    </SortMark>
                                  </Th>
                                ))}
                                <Th>
                                  {"Sale Date/\nTime"}
                                  <SortMark $inline>
                                    <Triangle dir="right" fill={grey} />
                                  </SortMark>
                                </Th>
                                <Th $indent={3}>
                                  Origin of Sale
                                  <SortMark>
                                    <Triangle dir="right" fill={grey} />
                                  </SortMark>
                                </Th>
                                <Th $align="center">
                                  Declined Referral
                                  <SortMark $center>
                                    <Triangle dir="right" fill={grey} />
                                  </SortMark>
                                </Th>
                                <Th />
                              </tr>
                            </thead>
                            <tbody>
                              {rows.map((row, r) => (
                                <Tr key={r} $selected={r === 0}>
                                  <RowHead $current={r === 0}>{r === 0 && <Triangle dir="right" fill="#000" />}</RowHead>
                                  {row.map((cell, c) => (
                                    <Td key={c} $right={c === 3}>
                                      {cell}
                                    </Td>
                                  ))}
                                  <Td>
                                    <HiddenColumnEdge />
                                  </Td>
                                </Tr>
                              ))}
                            </tbody>
                          </Table>
                        </GridScroll>
                        <HScroll>
                          <ScrollArrow dir="left" />
                          <HThumb>
                            <ThumbGrip />
                          </HThumb>
                          <ScrollArrow dir="right" />
                        </HScroll>
                      </GridFrame>

                      <BagRow>
                        <BagButton aria-label="Accept">
                          <BagIcon ok />
                        </BagButton>
                        <BagButton aria-label="Decline">
                          <BagIcon />
                        </BagButton>
                      </BagRow>
                    </InnerFrame>
                  </OuterFrame>
                </TabPanel>
              </Workspace>

              <StatusBar>
                <StatusCell $w={23} $pad={3}>
                  JM
                </StatusCell>
                <StatusCell $w={35} $muted>
                  OVR
                </StatusCell>
                <StatusCell $w={80} $pad={10}>
                  09/23/2014
                </StatusCell>
                <Spacer />
                <StatusCell $w={12} />
                <StatusCell $w={12} />
                <StatusCell $w={35}>MCF</StatusCell>
                <StatusCell $w={69}>20053-003</StatusCell>
              </StatusBar>
            </Main>
          </Body>
        </Client>
      </Window>
    </>
  );
}
